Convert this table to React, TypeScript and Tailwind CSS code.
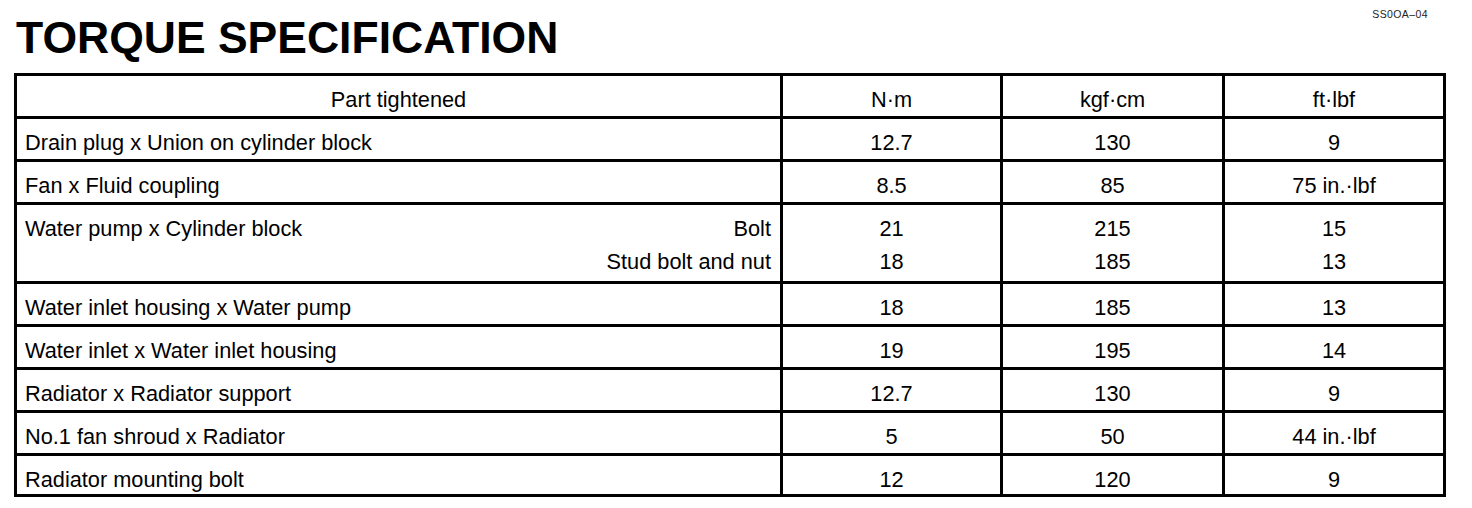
import React from "react";

type Row = {
  part: string;
  subs?: string[];
  nm: string[];
  kgf: string[];
  ft: string[];
};

const rows: Row[] = [
  { part: "Drain plug x Union on cylinder block", nm: ["12.7"], kgf: ["130"], ft: ["9"] },
  { part: "Fan x Fluid coupling", nm: ["8.5"], kgf: ["85"], ft: ["75 in.·lbf"] },
  {
    part: "Water pump x Cylinder block",
    subs: ["Bolt", "Stud bolt and nut"],
    nm: ["21", "18"],
    kgf: ["215", "185"],
    ft: ["15", "13"],
  },
  { part: "Water inlet housing x Water pump", nm: ["18"], kgf: ["185"], ft: ["13"] },
  { part: "Water inlet x Water inlet housing", nm: ["19"], kgf: ["195"], ft: ["14"] },
  { part: "Radiator x Radiator support", nm: ["12.7"], kgf: ["130"], ft: ["9"] },
  { part: "No.1 fan shroud x Radiator", nm: ["5"], kgf: ["50"], ft: ["44 in.·lbf"] },
  { part: "Radiator mounting bolt", nm: ["12"], kgf: ["120"], ft: ["9"] },
];

const grid = "grid grid-cols-[766px_220px_222px_218px]";

function ValueCell({ values, last }: { values: string[]; last?: boolean }) {
  return (
    <div className={`pt-[7px] text-center ${last ? "" : "border-r-[3px] border-black"}`}>
      {values.map((v, i) => (
        <div key={i} className="leading-[33px] whitespace-nowrap">
          {v}
        </div>
      ))}
    </div>
  );
}

export default function App() {
  return (
    <div className="w-[1472px] h-[508px] bg-white text-black font-['Liberation_Sans',Arial,sans-serif] pl-[14px]">
      <div className="flex items-start justify-between pr-[44px]">
        <h1 className="mt-[16px] ml-[2px] text-[44.5px] leading-[44px] font-bold">TORQUE SPECIFICATION</h1>
        <span className="mt-[7px] text-[10.5px] leading-[14px] tracking-[0.4px] text-[#222]">SS0OA–04</span>
      </div>

      <div className="mt-[13px] w-[1432px] border-[3px] border-black text-[21.75px]">
        <div className={`${grid} h-[43px] border-b-[3px] border-black`}>
          <div className="pt-[7px] leading-[33px] text-center border-r-[3px] border-black">Part tightened</div>
          <div className="pt-[7px] leading-[33px] text-center border-r-[3px] border-black">N·m</div>
          <div className="pt-[7px] leading-[33px] text-center border-r-[3px] border-black">kgf·cm</div>
          <div className="pt-[7px] leading-[33px] text-center">ft·lbf</div>
        </div>

        {rows.map((r, i) => {
          const isLast = i === rows.length - 1;
          const h = r.subs ? "h-[79px]" : isLast ? "h-[38px]" : "h-[43px]";
          return (
            <div key={i} className={`${grid} ${h} ${isLast ? "" : "border-b-[3px] border-black"}`}>
              <div className="pt-[7px] pl-[8px] pr-[9px] border-r-[3px] border-black">
                {r.subs ? (
                  <>
                    <div className="flex justify-between leading-[33px] whitespace-nowrap">
                      <span>{r.part}</span>
                      <span>{r.subs[0]}</span>
                    </div>
                    <div className="text-right leading-[33px] whitespace-nowrap">{r.subs[1]}</div>
                  </>
                ) : (
                  <div className="leading-[33px] whitespace-nowrap">{r.part}</div>
                )}
              </div>
              <ValueCell values={r.nm} />
              <ValueCell values={r.kgf} />
              <ValueCell values={r.ft} last />
            </div>
          );
        })}
      </div>
    </div>
  );
}
